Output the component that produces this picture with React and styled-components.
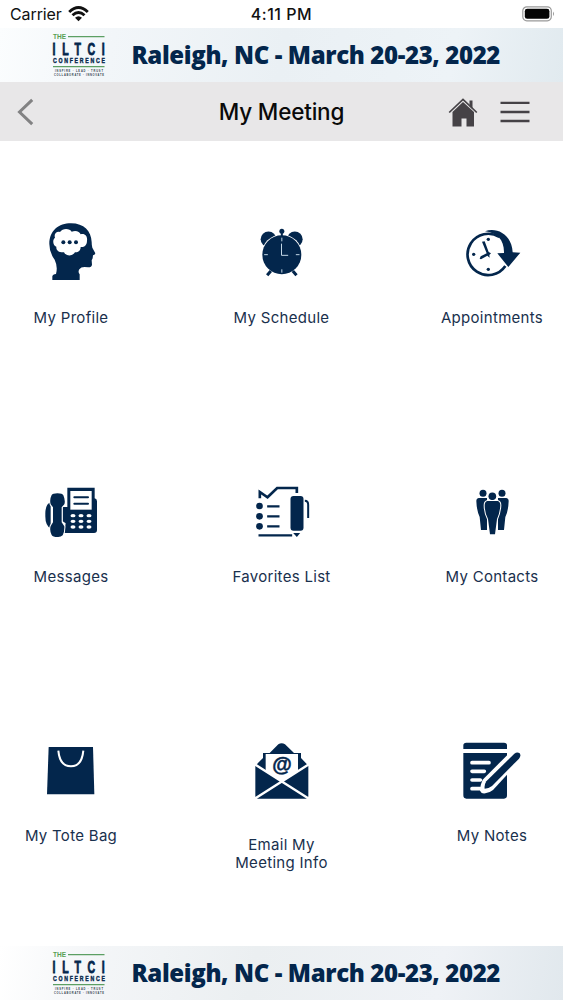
import React from "react"
import styled, { createGlobalStyle } from "styled-components"

const navy = "#03264c"

const GlobalStyle = createGlobalStyle`
  body {
    margin: 0;
    background: #fff;
    font-family: Inter, "Liberation Sans", sans-serif;
  }
`

const Screen = styled.div`
  display: flex;
  flex-direction: column;
  width: 563px;
  height: 1000px;
  overflow: hidden;
  background: #fff;
`

const StatusBar = styled.div`
  display: grid;
  grid-template-columns: 1fr auto 1fr;
  align-items: center;
  height: 28px;
  padding: 0 8px 0 10px;
  box-sizing: border-box;
  color: #111;
  font-size: 16px;
`

const Carrier = styled.div`
  display: flex;
  align-items: center;
  gap: 6px;
  letter-spacing: -0.1px;
`

const Time = styled.div`
  margin-right: 2px;
  font-weight: 500;
  letter-spacing: 0.5px;
`

const Battery = styled.svg`
  justify-self: end;
`

const BannerBar = styled.div`
  display: flex;
  align-items: center;
  flex: none;
  height: 54px;
  padding-left: 52px;
  background: ${props =>
    props.$bottom
      ? "linear-gradient(100deg, #fff 0%, #f4f6f8 16%, #ebeff1 45%, #eff2f6 78%, #e1e8ed 100%)"
      : "linear-gradient(100deg, #fbfdfe 0%, #f2f6f9 20%, #eaf0f4 50%, #edf3f7 80%, #e1eaef 100%)"};
`

const BannerText = styled.div`
  margin-left: 25.5px;
  color: ${navy};
  font-family: "Open Sans", "Noto Sans", sans-serif;
  font-size: 24px;
  font-weight: 800;
  line-height: 54px;
  letter-spacing: -0.37px;
  white-space: nowrap;
`

const NavBar = styled.header`
  display: grid;
  grid-template-columns: 1fr auto 1fr;
  align-items: center;
  flex: none;
  height: 59px;
  padding: 0 17px;
  box-sizing: border-box;
  background: #e8e7e8;
`

const Title = styled.h1`
  margin: 0;
  color: #0a0a0a;
  font-size: 22.5px;
  font-weight: 500;
  letter-spacing: -0.2px;
`

const Actions = styled.div`
  display: flex;
  align-items: center;
  justify-content: flex-end;
  gap: 22px;
  padding-right: 16px;
`

const Menu = styled.main`
  display: grid;
  grid-template-columns: repeat(3, 142px);
  grid-auto-rows: 259px;
  justify-content: space-between;
  flex: none;
  height: 805px;
  padding-top: 75px;
  box-sizing: border-box;
`

const Item = styled.a`
  display: flex;
  flex-direction: column;
  align-items: center;
`

const ItemIcon = styled.svg`
  width: 72px;
  height: 72px;
  fill: ${navy};
  flex: none;
`

const Label = styled.span`
  margin-top: ${props => (props.$tall ? 29.5 : 21)}px;
  color: #19304d;
  font-size: 15px;
  line-height: 18.5px;
  letter-spacing: 0.3px;
  text-align: center;
  white-space: pre-line;
`

const Logo = () => (
  <svg width="54" height="54" viewBox="52 28 54 54" fontFamily='"Liberation Sans Narrow", "Liberation Sans", sans-serif' fontWeight="700">
    <text x="53" y="39.4" fontSize="7" fill="#57a052" textLength="13" lengthAdjust="spacingAndGlyphs">THE</text>
    <path d="M68 36.7H104.5M53 66.7H104.5" stroke="#5c9f63" strokeWidth="1.2" />
    <g fill={navy} stroke={navy} strokeWidth="0.8">
      <text transform="translate(52.6 54.6) scale(.66 1)" fontSize="16" textLength="79" lengthAdjust="spacing">ILTCI</text>
      <text transform="translate(53 63) scale(.72 1)" fontSize="7.2" strokeWidth="0.4" textLength="72" lengthAdjust="spacing">CONFERENCE</text>
    </g>
    <g fill="#33424f">
      <text x="55" y="72.2" fontSize="2.6" textLength="48">INSPIRE  ·  LEAD  ·  TRUST</text>
      <text x="54" y="76" fontSize="2.6" textLength="50">COLLABORATE · INNOVATE</text>
    </g>
  </svg>
)

const Banner = ({ bottom }) => (
  <BannerBar $bottom={bottom}>
    <Logo />
    <BannerText>Raleigh, NC - March 20-23, 2022</BannerText>
  </BannerBar>
)

// Every icon is drawn at three units to the pixel
const items = [
  {
    label: "My Profile",
    viewBox: "45 18 216 216",
    icon: (
      <>
        <path d="M97 210V199Q98 193 108 192Q114 170 104 149Q88 128 88 102C88 62 116 40 153 40C192 40 214 64 215 96Q215 106 217 113L226 130Q226 135 219 136L218 145L215 151L216 164Q214 173 204 172Q184 168 178 178Q173 186 179 193V210Z" />
        <path fill="#fff" d="M120 66C128 53 150 55 155 65C167 60 179 64 182 73C195 69 203 79 201 92C201 105 193 112 182 111C182 122 174 128 165 127C159 139 138 140 132 127C117 128 108 122 109 110C98 106 97 89 105 83C101 72 109 63 120 66Z" />
        <circle cx="130" cy="97" r="6" />
        <circle cx="149" cy="97" r="6" />
        <circle cx="168" cy="97" r="6" />
      </>
    ),
  },
  {
    label: "My Schedule",
    viewBox: "62.5 18 216 216",
    icon: (
      <>
        <circle cx="130" cy="88" r="23.5" />
        <circle cx="209" cy="88" r="23.5" />
        <circle cx="170" cy="134" r="61" fill="#fff" />
        <path d="M137 183L126 196M203 183L214 196" fill="none" stroke={navy} strokeWidth="9" />
        <circle cx="170" cy="134" r="58.5" />
        <circle cx="170" cy="64" r="7.5" />
        <path d="M167 66H173V82H167Z" />
        <path d="M170 83V94M170 178V188M117 134H128M212 134H223M169 101V136H189" fill="none" stroke="#c2d6e5" strokeWidth="3" />
      </>
    ),
  },
  {
    label: "Appointments",
    viewBox: "63 18 216 216",
    icon: (
      <>
        <path d="M193 81A62 62 0 1 0 211 168" fill="none" stroke={navy} strokeWidth="8" />
        <path d="M150 64C183 50 231 72 233 127L256 128L220 171L187 130L207 129C208 89 187 69 150 64Z" />
        <path d="M141 95L149 94L161 126L168 130L163 135L164 143L157 137L138 148L134 146L137 139L155 130Z" />
        <circle cx="160" cy="88" r="5" />
        <circle cx="116" cy="133" r="5" />
        <circle cx="160" cy="178" r="5" />
      </>
    ),
  },
  {
    label: "Messages",
    viewBox: "45 0 216 216",
    icon: (
      <>
        <path d="M92 81Q75 88 76 120Q75 151 92 160ZM128 96H142V38H224V70Q231 71 231 79V165Q231 174 222 174H133L137 145L128 139Z" />
        <path fill="#fff" d="M151 48H215V104H151Z" />
        <path d="M163 67H204M163 86H204" fill="none" stroke={navy} strokeWidth="6" strokeLinecap="round" />
        <path
          d="M95 60Q98 55 112 55Q128 55 130 61Q137 77 133 88L125 97V142L133 154Q134 169 128 181Q122 187 112 186Q99 186 95 180Q88 166 92 153L99 142V97L92 88Q88 74 95 60Z"
          stroke="#fff"
          strokeWidth="6"
          paintOrder="stroke"
        />
        <g fill="#fff">
          {[122, 139, 156].map(y =>
            [159, 183, 207].map(x => <ellipse key={x + "-" + y} cx={x} cy={y} rx="7.5" ry="5" />)
          )}
        </g>
      </>
    ),
  },
  {
    label: "Favorites List",
    viewBox: "61.5 0 216 216",
    icon: (
      <>
        <path d="M103 70V51L126 67L155 39H214V54" fill="none" stroke={navy} strokeWidth="8" />
        <circle cx="102" cy="93" r="10" />
        <circle cx="102" cy="124" r="10" />
        <circle cx="102" cy="154" r="10" />
        <path d="M125 94H162M125 124H162M125 154H162M99 181H200" fill="none" stroke={navy} strokeWidth="7" />
        <rect x="195" y="63" width="39" height="104" rx="9" />
        <path d="M238 77Q248 77 248 89V129" fill="none" stroke={navy} strokeWidth="6" />
        <path d="M203 174H224L214 186Z" />
      </>
    ),
  },
  {
    label: "My Contacts",
    viewBox: "63 0 216 216",
    icon: (
      <>
        <circle cx="144" cy="55" r="10.5" />
        <circle cx="201" cy="55" r="10.5" />
        <path d="M132 69H156V165H138L134 126Q125 107 124 78Q124 70 132 69ZM189 69H213Q221 70 221 78Q220 108 211 126L207 165H189Z" />
        <circle cx="172" cy="64" r="11.5" stroke="#fff" strokeWidth="5" paintOrder="stroke" />
        <path
          d="M157 78H188Q196 80 196 91Q195 112 186 132L180 178H165L159 132Q149 112 149 91Q149 80 157 78Z"
          stroke="#fff"
          strokeWidth="6"
          paintOrder="stroke"
        />
      </>
    ),
  },
  {
    label: "My Tote Bag",
    viewBox: "45 -3 216 216",
    icon: (
      <>
        <path d="M86 36H219L223 178H81Z" />
        <path d="M115 47C118 82 134 94 153 94C173 94 187 79 190 47" fill="none" stroke="#fff" strokeWidth="6" />
      </>
    ),
  },
  {
    label: "Email My\nMeeting Info",
    tall: true,
    viewBox: "62 -3 216 216",
    icon: (
      <>
        <path d="M90 92L113 69V54H133L159 28Q169 21 179 28L206 54H227V69L249 92V182Q249 191 240 191H98Q90 190 90 182Z" />
        <path fill="#fff" d="M121 57H218V109L170 139L121 109Z" />
        <path d="M87 87L252 192M252 87L87 192" fill="none" stroke="#fff" strokeWidth="7" />
        <text x="170" y="109" textAnchor="middle" fontFamily="Liberation Sans, sans-serif" fontSize="60" fontWeight="700" stroke={navy} strokeWidth="1.5">@</text>
      </>
    ),
  },
  {
    label: "My Notes",
    viewBox: "63 -3 216 216",
    icon: (
      <>
        <path d="M85 42V31Q85 23 94 23H207Q216 23 216 31V42ZM85 54H216V181Q216 191 207 191H94Q85 191 85 181Z" />
        <path d="M111 83H162M111 109H148M111 135H136M111 161H137" stroke="#fff" strokeWidth="11" strokeLinecap="round" />
        <path d="M221 56L143 134Q135 150 135 167Q139 177 151 175Q166 172 174 165L252 80Z" fill="#fff" />
        <path d="M238 56Q247 49 254 55Q259 63 252 71L171 153Q161 161 149 161Q147 150 154 139Z" />
      </>
    ),
  },
]

const App = () => (
  <Screen>
    <GlobalStyle />
    <StatusBar>
      <Carrier>
        Carrier
        <svg width="21" height="16" viewBox="0 0 21 16" fill="none" stroke="#111" strokeWidth="2.9">
          <path d="M1.2 6Q10.5 -2.8 19.8 6M4.5 9.2Q10.5 3.7 16.5 9.2" />
          <path d="M7 11.8Q10.5 8.7 14 11.8L10.5 15.2Z" fill="#111" stroke="none" />
        </svg>
      </Carrier>
      <Time>4:11 PM</Time>
      <Battery width="33" height="16" viewBox="0 0 33 16">
        <rect x="0.8" y="0.8" width="28.5" height="14" rx="4" fill="none" stroke="#999" strokeWidth="1.2" />
        <rect x="2.8" y="2.8" width="24.6" height="10" rx="2.4" fill="#050505" />
        <path d="M31 5.5Q33 7.8 31 10Z" fill="#999" />
      </Battery>
    </StatusBar>
    <Banner />
    <NavBar>
      <svg width="18" height="28" viewBox="0 0 18 28" fill="none" stroke="#828283" strokeWidth="3">
        <path d="M15.2 1.8L2.5 14L15.2 26.2" />
      </svg>
      <Title>My Meeting</Title>
      <Actions>
        <svg width="30" height="30" viewBox="0 0 30 30" fill="#454246">
          <path d="M4.5 15L15 5L26 15V29.5H18.5V21.5H13.5V29.5H4.5Z" />
          <path d="M1.2 15.5L15 2.4L28.8 15.5" fill="none" stroke="#454246" strokeWidth="1.7" />
          <path d="M21.5 3.5H24.5V12L21.5 9Z" />
        </svg>
        <svg width="30" height="24" viewBox="0 0 30 24" stroke="#454246" strokeWidth="2.3">
          <path d="M0.5 2.8H29.5M0.5 12H29.5M0.5 21H29.5" />
        </svg>
      </Actions>
    </NavBar>
    <Menu>
      {items.map(({ label, viewBox, icon, tall }) => (
        <Item key={label}>
          <ItemIcon viewBox={viewBox}>{icon}</ItemIcon>
          <Label $tall={tall}>{label}</Label>
        </Item>
      ))}
    </Menu>
    <Banner bottom />
  </Screen>
)

export default App
